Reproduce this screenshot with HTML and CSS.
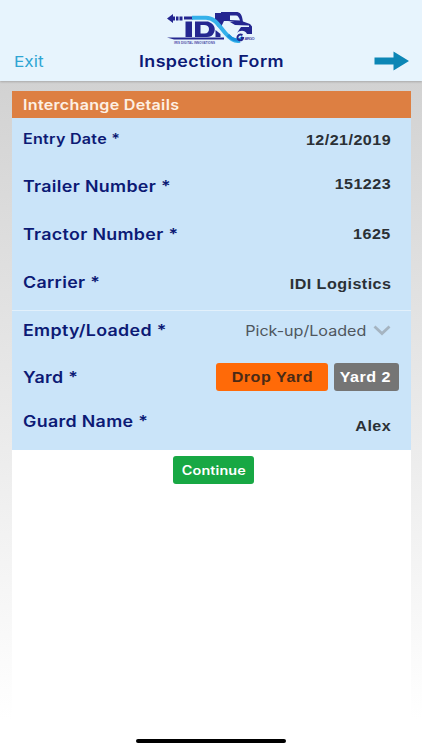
FILE: index.html
```
<!DOCTYPE html>
<html lang="en">
<head>
  <meta charset="utf-8">
  <title>Inspection Form</title>
  <link rel="stylesheet" href="styles.css">
</head>
<body>
  <div class="header">
    <svg class="logo" width="100" height="45" viewBox="0 0 100 45">
      <!-- dashed arrow -->
      <path fill="#242690" d="M7 13.500l6-4.500v2.500h2v4h-2v2.500zM16 11.500h2.500v4H16zM19.500 11.500h3v4h-3z"/>
      <path fill="#242690" d="M24 11.500h9v3h-9z"/>
      <!-- letters -->
      <path fill="#242690" d="M25.500 16.500H32V32h-6.500z"/>
      <path fill="#242690" fill-rule="evenodd" d="M35 16.500h13c6 2 8 7 6 11-1 3-4 4.500-7 4.500H35zM40.500 20v8.500h4c3 0 4.500-2 4.500-4.500S47 20 44 20z"/>
      <path fill="#242690" d="M55 8h7v15l-4-1-3-5zM55.500 25l5 4v3h-5z"/>
      <!-- truck -->
      <path fill="#242690" d="M61 7h15c4 0 6 2 7 10l-2 1-13-2h-4l-3 6z"/>
      <path fill="#e7f4fd" d="M70 10.500h6c2 0 3 2 4 5l-10-.5z"/>
      <path fill="#242690" d="M70 17l13-.5 7 2.500 2 2.500V29h-5c-2-4-7-4-10-1l4-6h8v-1.500l-14-.5z"/>
      <path fill="#242690" d="M7 32.500h57v2H14z"/>
      <!-- ribbon -->
      <path fill="none" stroke="#35b1ea" stroke-width="4" d="M32 12.800h14c10 0 14 10 20 16 4 5 9 8 14 7"/>
      <path fill="none" stroke="#168fdb" stroke-width="3" d="M68 30c4 5 11 7 15 2"/>
      <path fill="none" stroke="#242690" stroke-width="2" d="M82.500 30c-4-2-7 3-3.500 5 2 .8 3.500 0 4-2h-2"/>
      <text class="logo-cargo" x="84.500" y="35" textLength="10">ARGO</text>
      <text class="logo-tagline" x="14" y="38.500" textLength="41">IRIS DIGITAL INNOVATIONS</text>
    </svg>
    <div class="nav">
      <a class="exit"><span class="wide">Exit</span></a>
      <h1><span class="wide">Inspection Form</span></h1>
      <svg class="next" width="36" height="20" viewBox="0 0 36 20">
        <path fill="#0c86b5" d="M0.500 6.500h19V0.500l15.500 9.500-15.500 9.500v-6h-19z"/>
      </svg>
    </div>
  </div>

  <div class="card">
    <h2><span class="wide">Interchange Details</span></h2>
    <div class="row entry-date">
      <label><span class="wide">Entry Date *</span></label>
      <div class="value"><span class="wide">12/21/2019</span></div>
    </div>
    <div class="row trailer">
      <label><span class="wide">Trailer Number *</span></label>
      <div class="value"><span class="wide">151223</span></div>
    </div>
    <div class="row tractor">
      <label><span class="wide">Tractor Number *</span></label>
      <div class="value"><span class="wide">1625</span></div>
    </div>
    <div class="row carrier">
      <label><span class="wide">Carrier *</span></label>
      <div class="value"><span class="wide">IDI Logistics</span></div>
    </div>
    <div class="row load-state">
      <label><span class="wide">Empty/Loaded *</span></label>
      <div class="value select">
        <span class="wide">Pick-up/Loaded</span>
        <svg width="18" height="11" viewBox="0 0 18 11">
          <path fill="none" stroke="#a5b4c1" stroke-width="2.800" d="M1.500 1.500L9 8.500l7.500-7"/>
        </svg>
      </div>
    </div>
    <div class="row yard">
      <label><span class="wide">Yard *</span></label>
      <div class="buttons">
        <button class="button drop"><span class="wide">Drop Yard</span></button>
        <button class="button second"><span class="wide">Yard 2</span></button>
      </div>
    </div>
    <div class="row guard">
      <label><span class="wide">Guard Name *</span></label>
      <div class="value"><span class="wide">Alex</span></div>
    </div>
    <div class="footer">
      <button class="button continue"><span class="wide">Continue</span></button>
    </div>
  </div>
  <div class="home-bar"></div>
</body>
</html>
```

FILE: styles.css
```
* {
  box-sizing: border-box;
}

body {
  margin: 0;
  height: 750px;
  overflow: hidden;
  font-family: Inter, "Liberation Sans", sans-serif;
  background: linear-gradient(#d2d2d2 80px, #ffffff 720px);
}

/* stretches the lettering horizontally */
.wide {
  display: inline-block;
  white-space: nowrap;
  transform: scaleX(1.15);
  transform-origin: left center;
}

.header {
  height: 81px;
  padding-top: 5px;
  background-color: #e7f4fd;
  box-shadow: 0 1px 2px rgba(0, 0, 0, 0.2);
}

.logo {
  display: block;
  margin-left: 160px;
}

.logo-cargo,
.logo-tagline {
  font-family: "Liberation Sans", sans-serif;
  font-weight: bold;
  font-size: 4px;
  fill: #4a4ca5;
}

.logo-tagline {
  font-size: 3px;
}

.nav {
  display: grid;
  grid-template-columns: 125px 1fr 48px;
  align-items: center;
  height: 22px;
  padding-left: 14px;
}

.exit {
  color: #2fa5d3;
  font-size: 15px;
}

h1 {
  margin: 0;
  color: #0c1a75;
  font-size: 15.5px;
  font-weight: 600;
  letter-spacing: 0.35px;
}

.card {
  width: 399px;
  height: 670px;
  margin: 10px 0 0 12px;
  background-color: #fff;
}

h2 {
  display: flex;
  align-items: center;
  height: 27px;
  margin: 0;
  padding-left: 11px;
  background-color: #dd7f42;
  color: #fdf0e4;
  font-size: 14px;
  font-weight: 600;
  letter-spacing: 0.25px;
}

.row {
  display: flex;
  justify-content: space-between;
  align-items: center;
  padding: 0 20px 0 11px;
  background-color: #cae4f9;
}

label {
  color: #0c1a75;
  font-size: 15.5px;
  font-weight: 600;
  letter-spacing: 0.28px;
}

.value {
  color: #2b3035;
  font-family: "Liberation Sans", sans-serif;
  font-size: 14px;
  font-weight: bold;
  letter-spacing: 0.4px;
}

.value .wide {
  transform-origin: right center;
}

.entry-date {
  height: 44px;
}

.entry-date label {
  font-size: 14px;
  letter-spacing: 0.22px;
  padding-bottom: 4px;
}

.trailer {
  height: 48px;
}

.trailer .value {
  padding-bottom: 5px;
}

.tractor {
  height: 48px;
}

.carrier {
  height: 52px;
}

.carrier label {
  padding-bottom: 4px;
}

.load-state {
  height: 40px;
  border-top: 1px solid #e2f0fb;
}

.select {
  display: flex;
  align-items: center;
  gap: 7px;
  color: #4e565e;
  font-family: Inter, sans-serif;
  font-weight: 400;
  letter-spacing: 0;
}

.yard {
  height: 54px;
  padding-right: 12px;
}

.buttons {
  display: flex;
  gap: 6px;
}

.button {
  display: flex;
  align-items: center;
  justify-content: center;
  height: 28px;
  padding: 0;
  border: none;
  border-radius: 3px;
  color: #fff;
  font-family: "Liberation Sans", sans-serif;
  font-size: 14px;
  font-weight: bold;
  letter-spacing: 0.45px;
}

.button .wide {
  transform-origin: center;
}

.drop {
  width: 112px;
  padding-bottom: 1px;
  background-color: #ff6a08;
  color: #4b2a16;
}

.second {
  width: 65px;
  padding-right: 2px;
  background-color: #757575;
}

.guard {
  height: 46px;
}

.guard label {
  padding-bottom: 11px;
}

.guard .value {
  padding-bottom: 2px;
}

.footer {
  display: flex;
  justify-content: center;
  padding: 6px 0 0 4px;
}

.continue {
  width: 81px;
  background-color: #18a844;
  font-family: Inter, sans-serif;
  font-size: 12.5px;
  font-weight: 600;
  letter-spacing: 0.1px;
}

.home-bar {
  position: absolute;
  left: 136px;
  top: 739px;
  width: 150px;
  height: 4px;
  border-radius: 2px;
  background-color: #000;
}
```
